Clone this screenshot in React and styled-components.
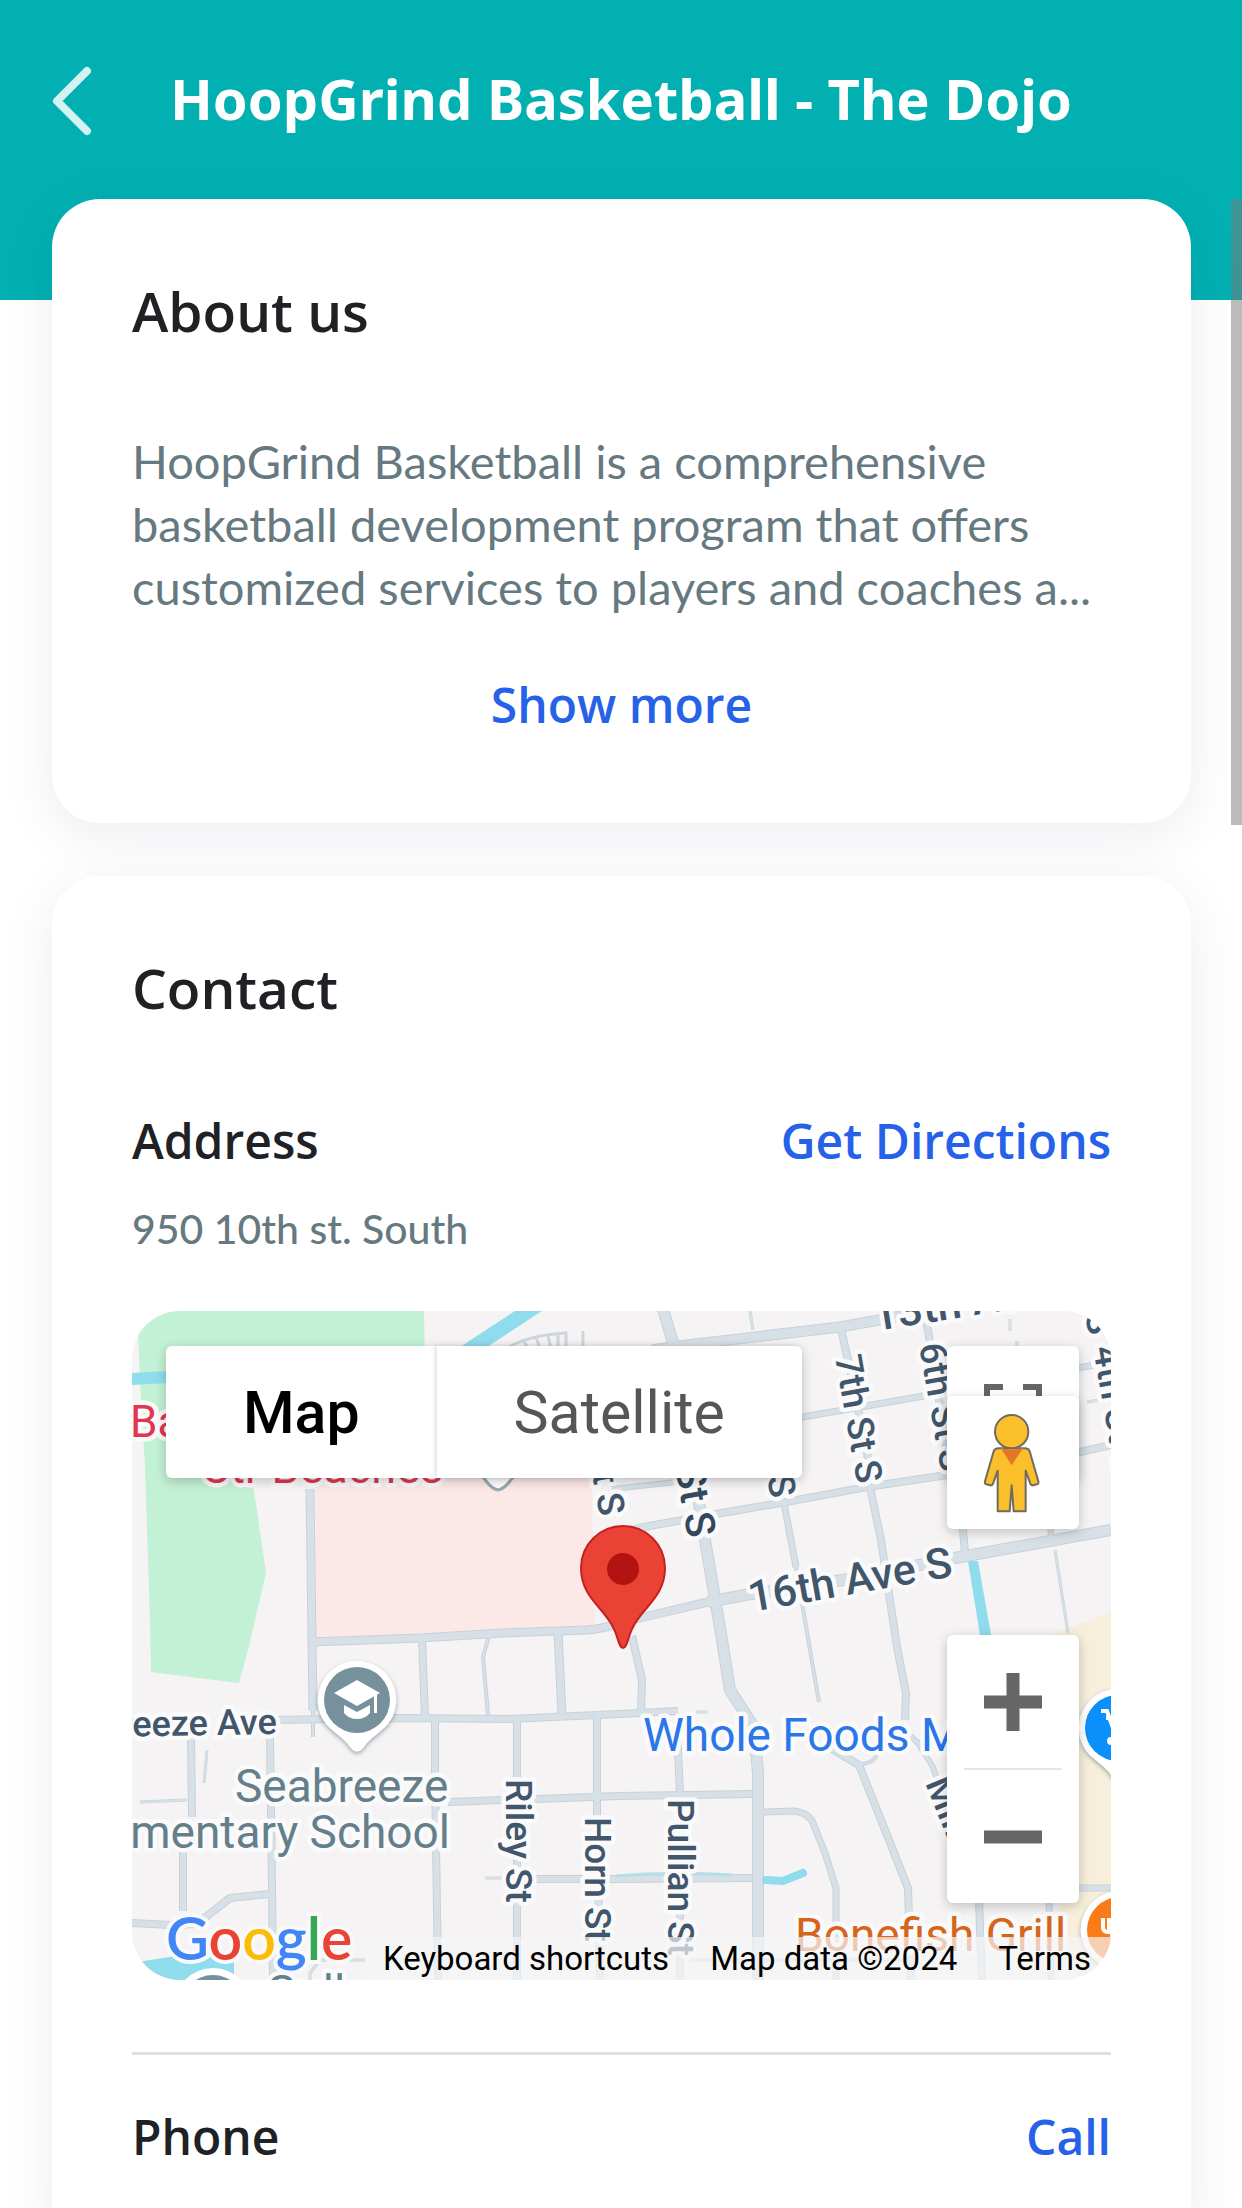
import React from 'react'
import styled, { createGlobalStyle } from 'styled-components'

const GlobalStyle = createGlobalStyle`
    * {
        box-sizing: border-box;
    }

    body {
        margin: 0;
        background-color: #ffffff;
        overflow: hidden;
    }
`

const Page = styled.div`
    position: relative;
    height: 100vh;
    overflow: hidden;
    font-family: 'Open Sans', 'Noto Sans', sans-serif;
    color: #202124;
`

const Header = styled.header`
    height: 300px;
    background-color: #02b0b1;
`

const HeaderBar = styled.div`
    display: flex;
    align-items: center;
    height: 200px;
    padding: 0 48px;
`

const BackButton = styled.button`
    display: flex;
    padding: 0;
    border: none;
    background: none;
    cursor: pointer;
`

const Title = styled.h1`
    flex: 1;
    margin: 0;
    padding: 0 50px 4px 0;
    font-family: 'Noto Sans', 'Open Sans', sans-serif;
    font-size: 56px;
    line-height: 76px;
    font-weight: 700;
    text-align: center;
    color: white;
`

const Content = styled.main`
    display: flex;
    flex-direction: column;
    gap: 53px;
    margin-top: -101px;
    padding: 0 51px 53px 52px;
`

const Card = styled.section`
    display: flex;
    flex-direction: column;
    padding: 80px 80px 88px;
    border-radius: 48px;
    background-color: #ffffff;
    box-shadow: 0 12px 54px rgba(24, 24, 72, 0.08);
`

const CardTitle = styled.h2`
    margin: 0 0 87px;
    font-size: 55px;
    line-height: 64px;
    font-weight: 600;
`

const Description = styled.p`
    margin: 0 0 56px;
    font-family: Lato, sans-serif;
    font-size: 47px;
    line-height: 63px;
    color: #667980;
`

const TextButton = styled.button`
    align-self: center;
    padding: 0;
    border: none;
    background: none;
    font-family: inherit;
    font-size: 48px;
    line-height: 60px;
    font-weight: 600;
    color: #2561e9;
    cursor: pointer;
`

const Row = styled.div`
    display: flex;
    justify-content: space-between;
    align-items: center;
    padding-top: 4px;
`

const RowTitle = styled.h3`
    margin: 0;
    font-size: 48px;
    line-height: 60px;
    font-weight: 600;
`

const RowLink = styled.a`
    font-size: 48px;
    line-height: 60px;
    font-weight: 600;
    color: #2561e9;
    text-decoration: none;
`

const Address = styled.p`
    margin: 32px 0 56px;
    font-family: Lato, sans-serif;
    font-size: 41px;
    line-height: 52px;
    font-weight: 500;
    color: #667980;
`

const Divider = styled.hr`
    width: 100%;
    height: 3px;
    margin: 72px 0 48px;
    border: none;
    background-color: #e0e0e0;
`

const MapBox = styled.div`
    position: relative;
    height: 669px;
    border-radius: 48px;
    overflow: hidden;
    font-family: Roboto, sans-serif;
    background-color: #f5f3f4;
`

const MapDrawing = styled.svg`
    display: block;
    width: 100%;
    height: 100%;
`

const MapTypes = styled.div`
    position: absolute;
    top: 35px;
    left: 34px;
    display: flex;
    border-radius: 6px;
    box-shadow: 0 3px 12px rgba(0, 0, 0, 0.22);
`

const MapType = styled.button`
    height: 132px;
    padding: 0 77px;
    border: none;
    border-radius: ${p => (p.$active ? '6px 0 0 6px' : '0 6px 6px 0')};
    background-color: white;
    box-shadow: ${p => (p.$active ? 'none' : '-2px 0 4px rgba(0, 0, 0, 0.12)')};
    font-family: inherit;
    font-size: 59px;
    font-weight: ${p => (p.$active ? 500 : 400)};
    color: ${p => (p.$active ? '#000000' : '#565656')};
    cursor: pointer;
`

const Controls = styled.div`
    position: absolute;
    top: ${p => p.$top};
    right: 32px;
    display: flex;
    flex-direction: column;
    align-items: center;
    width: 132px;
    border-radius: 6px;
    background-color: white;
    box-shadow: 0 3px 12px rgba(0, 0, 0, 0.22);
`

const ControlButton = styled.button`
    display: flex;
    align-items: center;
    justify-content: center;
    width: 132px;
    height: 133px;
    padding: 0;
    border: none;
    background: none;
    cursor: pointer;
`

const ControlLine = styled.div`
    width: 98px;
    height: 2px;
    background-color: #e6e6e6;
`

const Logo = styled.a`
    position: absolute;
    left: 34px;
    bottom: 6px;
    font-family: Lato, sans-serif;
    font-size: 59px;
    line-height: 72px;
    font-weight: 600;
    text-decoration: none;
    -webkit-text-stroke: 8px #f9f9fa;
    paint-order: stroke fill;
`

const Letter = styled.span`
    color: ${p => p.$color};
`

const Attribution = styled.div`
    position: absolute;
    right: 0;
    bottom: 0;
    display: flex;
    gap: 41px;
    padding: 0 20px 0 18px;
    background-color: rgba(245, 245, 246, 0.7);
    font-size: 33px;
    line-height: 43px;
    color: #000000;
`

const AttributionButton = styled.button`
    padding: 0;
    border: none;
    background: none;
    font: inherit;
    color: inherit;
    cursor: pointer;
`

const AttributionLink = styled.a`
    color: inherit;
    text-decoration: none;
`

const ScrollThumb = styled.div`
    position: absolute;
    top: 199px;
    right: 0;
    width: 11px;
    height: 626px;
    background-color: rgba(120, 120, 120, 0.5);
`

const Roads = styled.g`
    fill: none;
    stroke: ${p => p.$color};
    stroke-linejoin: round;
`

const Label = styled.text`
    font-size: ${p => p.$size || 37}px;
    font-weight: ${p => p.$weight || 500};
    fill: ${p => p.$color || '#42566b'};
    stroke: #fafafb;
    stroke-width: 9px;
    stroke-linejoin: round;
    paint-order: stroke;
    text-anchor: ${p => p.$anchor || 'start'};
`

const roads = [
    // west side
    [9, 'M178 178L181 400'],
    [4, 'M181 400V426'],
    [9, 'M181 331L288 327L371 322L455 319Q470 318 488 312L512 306L576 291'],
    [8, 'M290 327L293 406'],
    [4, 'M357 325L351 346L356 404'],
    [9, 'M426 321L430 403'],
    [8, 'M140 409L268 407L375 408L488 403L546 400'],
    [3, 'M564 401H576'],
    [8, 'M303 408L303 462L306 669'],
    [8, 'M385 408V669'],
    [8, 'M465 405V506L468 669'],
    [8, 'M59 425L60 506'],
    [8, 'M51 540V600'],
    [3, 'M8 491L55 489'],
    [3, 'M75 439L72 472'],
    [8, 'M138 425L140 576L141 669'],
    [8, 'M138 583L98 587L70 609'],
    [8, 'M0 612L38 614L66 613'],
    [3, 'M178 669V662L188 649H233'],
    [8, 'M316 491L488 485L620 483'],
    [3, 'M353 567H370'],
    [8, 'M378 568H488L620 567'],
    [8, 'M500 325L510 369L509 401'],
    [8, 'M546 402V440L548 484V669'],
    [3, 'M558 649H780'],
    // grid around the avenues
    [12, 'M531 -2L542 35L573 229L585 299L590 329L598 379L622 416L626 462V669'],
    [11, 'M520 39L546 35L708 16L780 3'],
    [3, 'M618 0L621 19'],
    [8, 'M709 18L716 49L735 139L738 176L749 229L765 336L774 382L773 409'],
    [6, 'M773 420L786 432L801 456L812 490'],
    [7, 'M652 192L664 256'],
    [4, 'M664 256L678 339L687 391'],
    [8, 'M791 -2L796 19L815 140L831 219L833 242'],
    [3, 'M878 8V20'],
    [3, 'M885 30V40'],
    [7, 'M665 107L786 86L979 51'],
    [3, 'M955 91L979 87'],
    [6, 'M480 178L544 171'],
    [8, 'M500 219L512 216L590 202L654 191L735 176L815 164L948 141L979 134'],
    [12, 'M576 291L613 284L711 269L823 247L979 219'],
    [6, 'M918 205L919 230'],
    [3, 'M923 239L936 322'],
    // south side
    [7, 'M630 501L662 500Q677 502 681 512L693 542L704 577V669'],
    [8, 'M700 438L727 454L749 509L776 577L779 669'],
    [4, 'M727 454Q744 451 744 444'],
    [8, 'M847 590L850 669'],
    [7, 'M917 590L919 669'],
    [7, 'M940 577H979'],
]

const PlacePin = ({ x, y, color, children }) => (
    <g transform={`translate(${x} ${y})`}>
        <path
            d="M0 -39A39 39 0 0 1 31 24C24 32 12 39 7 47Q0 56 -7 47C-12 39 -24 32 -31 24A39 39 0 0 1 0 -39Z"
            fill="white"
            filter="url(#pinShadow)"
        />
        <circle r="33" fill={color} />
        {children}
    </g>
)

const StreetMap = () => (
    <MapDrawing viewBox="0 0 979 669" preserveAspectRatio="xMidYMid slice" aria-label="Street map">
        <defs>
            <filter id="pinShadow" x="-30%" y="-30%" width="160%" height="160%">
                <feDropShadow dx="0" dy="2" stdDeviation="2" floodColor="#5d6e78" floodOpacity="0.6" />
            </filter>
        </defs>
        <path d="M5 0H292L295 160H118L123 186L134 262L116 339L107 372L19 361L18 310L13 156L8 69Z" fill="#c3f1d5" />
        <path d="M183 160H459L463 317L185 327Z" fill="#fce8e6" />
        <path d="M923 322L979 301V669H948L925 597L940 590Z" fill="#f7efdb" />
        <g fill="#8fdcec">
            <path d="M0 62L36 60V72L0 74Z" />
            <path d="M325 38L383 0H410L352 38Z" />
            <path d="M836 250H846L859 324H848Z" />
            <path d="M0 652L81 639L102 649V669H0Z" />
        </g>
        <path d="M377 36Q398 24 434 22V38M392 30L396 38M404 26L408 38M416 24L419 38M426 24V38M451 20V38" fill="none" stroke="#cdd6de" strokeWidth="3" />
        <Roads $color="#c6d2da">
            {roads.map(([width, d]) => (
                <path key={d} d={d} strokeWidth={width} />
            ))}
        </Roads>
        <Roads $color="#d6e0e6">
            {roads.map(([width, d]) => (
                <path key={d} d={d} strokeWidth={Math.max(width - 2, 2)} />
            ))}
        </Roads>
        <path d="M484 565Q540 560 600 564" fill="none" stroke="#b5dfe7" strokeWidth="3" />
        <path d="M634 569L651 570L671 562" fill="none" stroke="#8fdcec" strokeWidth="8" strokeLinecap="round" />

        <Label $size={44} $weight={400} $color="#e0364f" x="-2" y="126">Ba</Label>
        <Label $size={45} $weight={400} $color="#e0364f" x="69" y="172">Ctr Beaches</Label>
        <path d="M345 158L354 170Q360 178 366 179Q372 178 378 170L388 158" fill="white" stroke="#9aaab3" strokeWidth="3" />

        <Label $size={44} transform="translate(743 20) rotate(-9)">13th Ave</Label>
        <Label transform="translate(703 46) rotate(80)">7th St S</Label>
        <Label transform="translate(787 34) rotate(80)">6th St S</Label>
        <Label transform="translate(961 37) rotate(80)">4th St S</Label>
        <Label $anchor="end" transform="translate(957 25) rotate(80)">S</Label>
        <Label $anchor="end" transform="translate(639 188) rotate(80)">St S</Label>
        <Label $size={41} $anchor="end" $color="#34495e" transform="translate(556 228) rotate(80)">St S</Label>
        <Label $anchor="end" transform="translate(468 206) rotate(80)">St S</Label>
        <Label $size={43} transform="translate(619 301) rotate(-10)">16th Ave S</Label>
        <Label $size={36} $anchor="end" transform="translate(145 423) rotate(-1)">Seabreeze Ave</Label>
        <Label transform="translate(374 468) rotate(90)">Riley St</Label>
        <Label transform="translate(453 506) rotate(90)">Horn St</Label>
        <Label transform="translate(536 488) rotate(90)">Pullian St</Label>
        <Label transform="translate(793 472) rotate(68)">Mill</Label>

        <Label $size={46} $weight={400} $color="#647f8a" x="103" y="491">Seabreeze</Label>
        <Label $size={46} $weight={400} $color="#647f8a" $anchor="end" x="318" y="537">Elementary School</Label>
        <Label $size={46} $weight={400} $color="#2b76e9" x="511" y="440">Whole Foods M</Label>
        <Label $size={46} $weight={400} $color="#d5651b" x="663" y="640">Bonefish Grill</Label>
        <Label $size={46} $weight={400} $color="#647f8a" x="134" y="697">Gull</Label>

        <PlacePin x={225} y={389} color="#76909c">
            <path d="M-23 -7L0 -20L23 -7L0 6ZM17 -6H20V13H17ZM-13 5L0 12L13 5V13Q8 19 0 19Q-8 19 -13 13Z" fill="white" />
        </PlacePin>
        <PlacePin x={986} y={417} color="#0a8ffb">
            <path d="M-17 -17H-11L-4 3H6M-12 -10H8" fill="none" stroke="white" strokeWidth="4" />
            <circle cx="-7" cy="13" r="4" fill="white" />
        </PlacePin>
        <PlacePin x={988} y={619} color="#fa7b17">
            <path d="M-17 -12V-3Q-17 2 -12 2H-8V18M-11 -12V0" fill="none" stroke="white" strokeWidth="4" />
        </PlacePin>
        <circle cx="81" cy="696" r="39" fill="white" />
        <circle cx="81" cy="696" r="32" fill="#76909c" />

        <path
            d="M491 337C487 337 486 326 482 318C473 297 449 287 449 257A42 42 0 0 1 533 257C533 287 509 297 500 318C496 326 495 337 491 337Z"
            fill="#ea4335"
            stroke="#c5221f"
            strokeWidth="2"
        />
        <circle cx="491" cy="258" r="16" fill="#b31412" />
    </MapDrawing>
)

const Pegman = () => (
    <svg width="61" height="100" viewBox="125 215 183 300" aria-hidden="true">
        <g fill="#fbbf2c" stroke="#6f6a62" strokeWidth="6" strokeLinejoin="round">
            <path d="M172 321Q160 321 157 330L131 420Q129 427 135 429L147 432Q153 433 155 427L169 388V510H205L211 432L217 510H253V388L267 427Q269 433 275 432L287 429Q293 427 291 420L265 330Q262 321 250 321Z" />
            <circle cx="211" cy="271" r="50" />
        </g>
        <path d="M178 319Q211 330 246 319L211 372Z" fill="#e37627" />
    </svg>
)

const App = () => {
    return (
        <Page>
            <GlobalStyle />
            <Header>
                <HeaderBar>
                    <BackButton aria-label="Back">
                        <svg width="50" height="76" viewBox="0 0 50 76">
                            <path d="M39 9L9 39L39 69" fill="none" stroke="#d3f2f2" strokeWidth="8" strokeLinecap="round" strokeLinejoin="round" />
                        </svg>
                    </BackButton>
                    <Title>HoopGrind Basketball - The Dojo</Title>
                </HeaderBar>
            </Header>
            <Content>
                <Card>
                    <CardTitle>About us</CardTitle>
                    <Description>
                        HoopGrind Basketball is a comprehensive basketball development program that offers
                        customized services to players and coaches a...
                    </Description>
                    <TextButton>Show more</TextButton>
                </Card>
                <Card>
                    <CardTitle>Contact</CardTitle>
                    <Row>
                        <RowTitle>Address</RowTitle>
                        <RowLink href="#directions">Get Directions</RowLink>
                    </Row>
                    <Address>950 10th st. South</Address>
                    <MapBox>
                        <StreetMap />
                        <MapTypes>
                            <MapType $active>Map</MapType>
                            <MapType>Satellite</MapType>
                        </MapTypes>
                        <Controls $top="35px">
                            <ControlButton aria-label="Toggle fullscreen view">
                                <svg width="58" height="58" viewBox="0 0 58 58">
                                    <path d="M3 19V3H19M39 3H55V19M55 39V55H39M19 55H3V39" fill="none" stroke="#666666" strokeWidth="6" />
                                </svg>
                            </ControlButton>
                        </Controls>
                        <Controls $top="85px">
                            <ControlButton aria-label="Street View">
                                <Pegman />
                            </ControlButton>
                        </Controls>
                        <Controls $top="324px">
                            <ControlButton aria-label="Zoom in">
                                <svg width="58" height="58" viewBox="0 0 58 58">
                                    <path d="M0 29H58M29 0V58" stroke="#666666" strokeWidth="13" />
                                </svg>
                            </ControlButton>
                            <ControlLine />
                            <ControlButton aria-label="Zoom out">
                                <svg width="58" height="58" viewBox="0 0 58 58">
                                    <path d="M0 29H58" stroke="#666666" strokeWidth="13" />
                                </svg>
                            </ControlButton>
                        </Controls>
                        <Attribution>
                            <AttributionButton>Keyboard shortcuts</AttributionButton>
                            <span>Map data ©2024</span>
                            <AttributionLink href="#terms">Terms</AttributionLink>
                        </Attribution>
                        <Logo href="#google">
                            <Letter $color="#4285f4">G</Letter>
                            <Letter $color="#ea4335">o</Letter>
                            <Letter $color="#fbbc04">o</Letter>
                            <Letter $color="#4285f4">g</Letter>
                            <Letter $color="#34a853">l</Letter>
                            <Letter $color="#ea4335">e</Letter>
                        </Logo>
                    </MapBox>
                    <Divider />
                    <Row>
                        <RowTitle>Phone</RowTitle>
                        <RowLink href="#call">Call</RowLink>
                    </Row>
                </Card>
            </Content>
            <ScrollThumb />
        </Page>
    )
}

export default App
